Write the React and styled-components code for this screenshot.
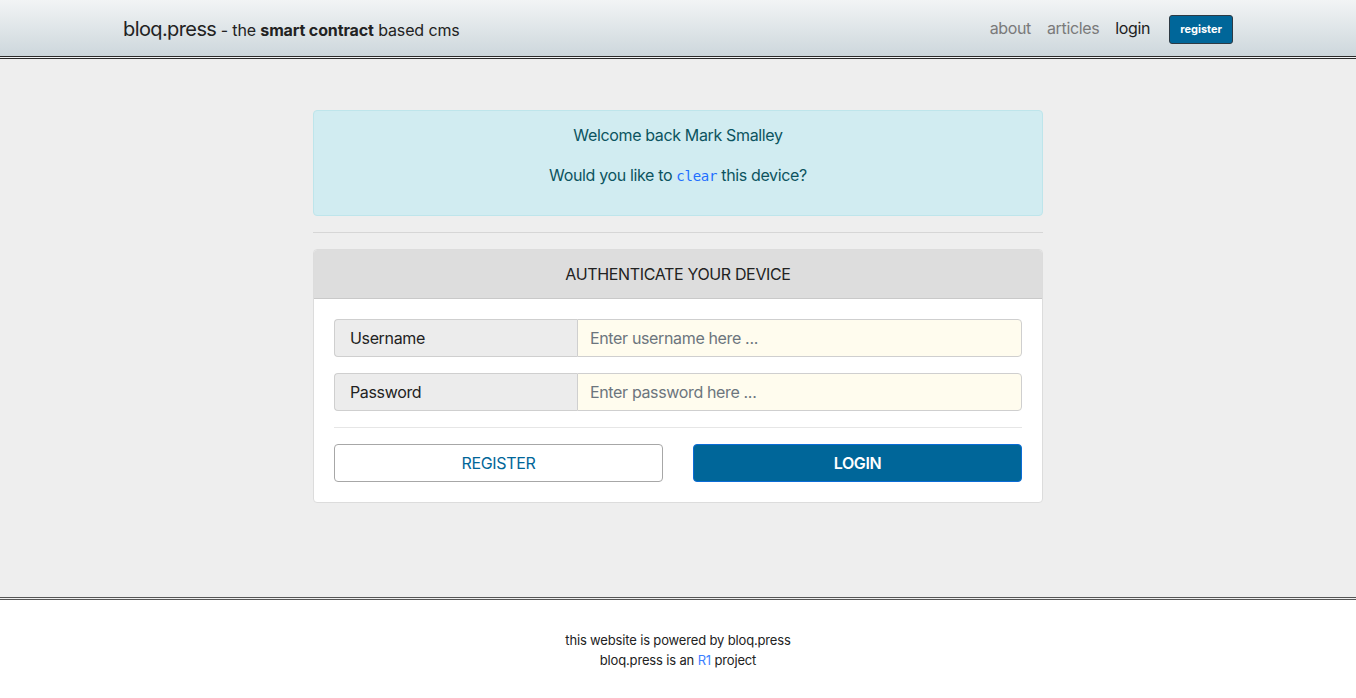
import React from "react";
import styled, { createGlobalStyle } from "styled-components";

const GlobalStyle = createGlobalStyle`
  html, body {
    margin: 0;
    padding: 0;
    background: #fff;
  }
  body {
    font-family: Inter, "Liberation Sans", sans-serif;
    font-size: 16px;
    line-height: 1.5;
    letter-spacing: -0.022em;
    color: #212529;
  }
  * {
    box-sizing: border-box;
  }
`;

export default function App() {
  return (
    <>
      <GlobalStyle />
      <Header>
        <Container>
          <Brand>
            <BrandName>bloq.press</BrandName>
            <Tagline>
              {" "}- the <strong>smart contract</strong> based cms
            </Tagline>
          </Brand>
          <Nav>
            <NavLink href="#">about</NavLink>
            <NavLink href="#">articles</NavLink>
            <NavLink href="#" $active>
              login
            </NavLink>
            <NavButton>register</NavButton>
          </Nav>
        </Container>
      </Header>

      <Main>
        <Column>
          <Alert>
            <AlertLine>Welcome back Mark Smalley</AlertLine>
            <AlertLine>
              Would you like to <ClearLink href="#">clear</ClearLink> this
              device?
            </AlertLine>
          </Alert>
          <Rule />
          <Card>
            <CardHeader>AUTHENTICATE YOUR DEVICE</CardHeader>
            <CardBody>
              <InputGroup>
                <InputLabel>Username</InputLabel>
                <Input placeholder="Enter username here ..." />
              </InputGroup>
              <InputGroup>
                <InputLabel>Password</InputLabel>
                <Input type="password" placeholder="Enter password here ..." />
              </InputGroup>
              <Rule $inset />
              <ButtonRow>
                <Button>REGISTER</Button>
                <Button $primary>LOGIN</Button>
              </ButtonRow>
            </CardBody>
          </Card>
        </Column>
      </Main>

      <Footer>
        <FooterLine>this website is powered by bloq.press</FooterLine>
        <FooterLine>
          bloq.press is an <FooterLink href="#">R1</FooterLink> project
        </FooterLine>
      </Footer>
    </>
  );
}

const Header = styled.header`
  height: 59px;
  background: linear-gradient(to bottom, #f2f4f5 0%, #cdd7dc 100%);
  border-bottom: 3px double #2a2a2a;
`;

const Container = styled.div`
  width: 1110px;
  margin: 0 auto;
  height: 56px;
  display: flex;
  align-items: center;
  justify-content: space-between;
`;

const Brand = styled.div`
  display: flex;
  align-items: baseline;
  color: #222;
  padding-top: 2px;
`;

const BrandName = styled.span`
  font-size: 20px;
  letter-spacing: -0.03em;
`;

const Tagline = styled.span`
  font-size: 16px;
  letter-spacing: -0.008em;
  white-space: pre;
  strong {
    font-weight: 700;
  }
`;

const Nav = styled.nav`
  display: flex;
  align-items: center;
  gap: 16px;
`;

const NavLink = styled.a`
  color: ${(p) => (p.$active ? "#1d1d1d" : "#7a7a7a")};
  text-decoration: none;
  font-size: 16px;
`;

const NavButton = styled.button`
  margin: 2px 0 0 3px;
  height: 29px;
  padding: 0 10px;
  background: #006699;
  color: #fff;
  border: 1px solid #2d3a44;
  border-radius: 3px;
  font-family: inherit;
  font-size: 11px;
  font-weight: 700;
  letter-spacing: 0;
`;

const Main = styled.main`
  background: #eeeeee;
  height: 541px;
  padding-top: 51px;
  border-bottom: 3px double #555;
`;

const Column = styled.div`
  width: 730px;
  margin: 0 auto;
`;

const Alert = styled.div`
  background: #d1ecf1;
  border: 1px solid #bee5eb;
  border-radius: 4px;
  color: #0c5460;
  padding: 12px 20px;
  text-align: center;
`;

const AlertLine = styled.p`
  margin: 0 0 16px;
`;

const ClearLink = styled.a`
  font-family: "DejaVu Sans Mono", "Liberation Mono", monospace;
  font-size: 14px;
  letter-spacing: -0.02em;
  color: #1f6fff;
  text-decoration: none;
`;

const Rule = styled.hr`
  border: 0;
  border-top: 1px solid ${(p) => (p.$inset ? "#e6e6e6" : "#d6d6d6")};
  margin: 16px 0;
`;

const Card = styled.div`
  background: #fff;
  border: 1px solid #dcdcdc;
  border-radius: 4px;
  overflow: hidden;
`;

const CardHeader = styled.div`
  background: #dddddd;
  border-bottom: 1px solid #c9c9c9;
  padding: 12px 20px;
  text-align: center;
  color: #222;
`;

const CardBody = styled.div`
  padding: 20px;
`;

const InputGroup = styled.div`
  display: flex;
  height: 38px;
  margin-bottom: 16px;
`;

const InputLabel = styled.span`
  width: 243px;
  flex: none;
  display: flex;
  align-items: center;
  padding: 0 15px;
  background: #ececec;
  border: 1px solid #cfcfcf;
  border-right: 0;
  border-radius: 4px 0 0 4px;
  color: #222;
`;

const Input = styled.input`
  flex: 1;
  min-width: 0;
  padding: 0 12px;
  background: #fffcee;
  border: 1px solid #cfcfcf;
  border-radius: 0 4px 4px 0;
  font-family: inherit;
  font-size: 16px;
  letter-spacing: inherit;
  color: #495057;
  outline: none;
  &::placeholder {
    color: #6c757d;
  }
`;

const ButtonRow = styled.div`
  display: grid;
  grid-template-columns: 1fr 1fr;
  gap: 30px;
`;

const Button = styled.button`
  height: 38px;
  border-radius: 4px;
  font-family: inherit;
  font-size: 16px;
  letter-spacing: inherit;
  font-weight: ${(p) => (p.$primary ? 600 : 400)};
  background: ${(p) => (p.$primary ? "#006699" : "#fff")};
  color: ${(p) => (p.$primary ? "#fff" : "#006699")};
  border: 1px solid ${(p) => (p.$primary ? "#0b6cd6" : "#a7a7a7")};
`;

const Footer = styled.footer`
  background: #fff;
  padding-top: 31px;
  text-align: center;
  font-size: 13px;
  line-height: 19.5px;
  letter-spacing: -0.012em;
  color: #222;
`;

const FooterLine = styled.div``;

const FooterLink = styled.a`
  color: #3d7fff;
  text-decoration: none;
`;
